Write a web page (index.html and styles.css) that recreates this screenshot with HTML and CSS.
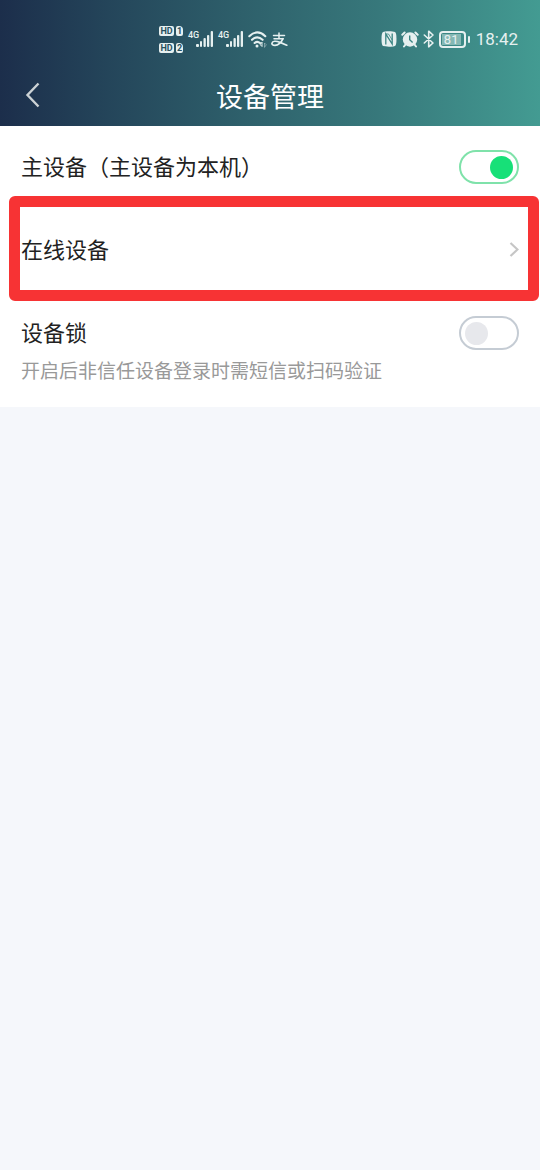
FILE: index.html
```html
<!DOCTYPE html>
<html lang="zh-CN">
<head>
<meta charset="utf-8">
<meta name="viewport" content="width=device-width, initial-scale=1">
<title>设备管理</title>
<link rel="stylesheet" href="styles.css">
</head>
<body>
<header class="header">
  <div class="status">
    <div class="status-left">
      <div class="hd-grid">
        <span class="chip">HD</span><span class="chip chip-sim">1</span>
        <span class="chip">HD</span><span class="chip chip-sim">2</span>
      </div>
      <div class="signal">
        <span class="net">4G</span>
        <svg width="18" height="16" viewBox="0 0 18 16" fill="currentColor" aria-hidden="true"><rect x="0" y="13" width="3" height="3" rx="1"/><rect x="4" y="10" width="2" height="6" rx="1"/><rect x="7.500" y="7" width="2.300" height="9" rx="1"/><rect x="11" y="4" width="2.300" height="12" rx="1"/><rect x="14.700" y="0" width="2.300" height="16" rx="1"/></svg>
      </div>
      <div class="signal">
        <span class="net">4G</span>
        <svg width="18" height="16" viewBox="0 0 18 16" fill="currentColor" aria-hidden="true"><rect x="0" y="13" width="3" height="3" rx="1"/><rect x="4" y="10" width="2" height="6" rx="1"/><rect x="7.500" y="7" width="2.300" height="9" rx="1"/><rect x="11" y="4" width="2.300" height="12" rx="1"/><rect x="14.700" y="0" width="2.300" height="16" rx="1"/></svg>
      </div>
      <svg width="19" height="17" viewBox="0 0 19 17" fill="none" stroke="currentColor" stroke-width="2.100" stroke-linecap="round" aria-hidden="true"><path d="M1.300 5.200Q9.300-2.400 17.300 5.200M4 8.800Q9.300 3.800 14.600 8.800M6.600 12Q9.300 9.600 12 12"/><circle cx="9" cy="15" r="1.500" fill="currentColor" stroke="none"/><path d="M14 11.500v4l-1.500-1.500z" stroke-width="1"/><path d="M16.500 16v-4l1.500 1.500z" stroke-width=".8" opacity=".5"/></svg>
      <svg width="17" height="15" viewBox="0 0 17 15" fill="none" stroke="currentColor" stroke-width="1.500" stroke-linecap="round" aria-hidden="true"><path d="M2.500 3.500h11M8 1v5.500M3 6.700h9"/><path d="M12 6.700C10.500 10 7.500 13.300 4 13.300C1.500 13.300.7 12 1 11C1.600 8.800 5 8.800 9 10.400L15.800 13.200" stroke-width="1.700"/></svg>
    </div>
    <div class="status-right">
      <svg width="16" height="16" viewBox="0 0 16 16" aria-hidden="true"><path fill="currentColor" d="M4 .5C8 0 12 .3 14 1Q15.500 2 15.500 8T14 15Q12 16 8 15.700T2 15Q.5 14 .5 8T2 1z"/><path class="cut" d="M4.800 13.500V3L11.200 13V2.500" stroke-width="1.300"/><path class="cut" d="M4.800 3L7.500 3L11.200 9" stroke-width=".8"/></svg>
      <svg width="18" height="17" viewBox="0 0 18 17" aria-hidden="true"><circle cx="9" cy="8.500" r="7.200" fill="currentColor"/><path d="M1.300 3.800L3.600 1.500M16.700 3.800L14.400 1.500M4.500 13.500L3 15.500M13.500 13.500L15 15.500" stroke="currentColor" stroke-width="2" stroke-linecap="round"/><path class="cut" d="M8.700 4.500V8.800L11.600 11.500" stroke-width="1.400"/></svg>
      <svg width="12" height="18" viewBox="0 0 12 18" fill="none" stroke="currentColor" stroke-width="1.600" stroke-linejoin="round" stroke-linecap="round" aria-hidden="true"><path d="M1.300 5L10 13L5.700 16.800V1.200L10 5L1.300 13"/></svg>
      <div class="battery"><span class="battery-body"><span class="battery-level">81</span></span><span class="battery-cap"></span></div>
      <time class="clock">18:42</time>
    </div>
  </div>
  <div class="titlebar">
    <button class="back" type="button" aria-label="返回"><svg width="16" height="26" viewBox="0 0 16 26" fill="none" stroke="currentColor" stroke-width="2.400" aria-hidden="true"><path d="M14.500 1.500L3.500 13L14.500 24.500"/></svg></button>
    <h1 class="title">设备管理</h1>
  </div>
</header>
<main class="list">
  <div class="row">
    <label class="label" for="primary">主设备（主设备为本机）</label>
    <input class="switch" id="primary" type="checkbox" role="switch" checked>
  </div>
  <a class="row row-marked" href="#online">
    <span class="label">在线设备</span>
    <svg class="arrow" width="12" height="16" viewBox="0 0 12 16" fill="none" stroke="currentColor" stroke-width="2.200" aria-hidden="true"><path d="M3.500 1L10.500 7.500L3.500 14"/></svg>
  </a>
  <div class="row row-lock">
    <label class="label" for="lock">设备锁</label>
    <input class="switch" id="lock" type="checkbox" role="switch" aria-describedby="lock-note">
    <p class="note" id="lock-note">开启后非信任设备登录时需短信或扫码验证</p>
  </div>
</main>
</body>
</html>
```

FILE: styles.css
```css
* {
  box-sizing: border-box;
}

body {
  margin: 0;
  min-height: 100vh;
  background: #f5f7fb;
  color: #222;
  font-family: Roboto, "Noto Sans CJK SC", sans-serif;
}

svg {
  display: block;
  flex: none;
}

.header {
  padding-top: 22px;
  background: linear-gradient(90deg, #1c2e4b 0%, #24455a 20%, #2e606b 45%, #37787b 70%, #439b92 100%);
  color: #fff;
}

.status {
  display: flex;
  justify-content: space-between;
  height: 34px;
  padding: 0 22px 0 159px;
  color: #e6f0f0;
}

.status-left,
.status-right {
  display: flex;
  align-items: center;
  gap: 4px;
}

.hd-grid {
  display: grid;
  grid-template-columns: 15px 7px;
  gap: 7px 2px;
}

.chip {
  height: 10px;
  border-radius: 2px;
  background: #e6f0f0;
  color: #28505f;
  font-size: 9px;
  font-weight: 700;
  line-height: 10px;
  text-align: center;
}

.chip-sim {
  border-top-right-radius: 4px;
}

.signal {
  display: flex;
  align-items: flex-start;
  width: 26px;
}

.hd-grid + .signal {
  margin-left: 1px;
}

.net {
  width: 8px;
  font-size: 9px;
  font-weight: 500;
  line-height: 8px;
}

.cut {
  fill: none;
  stroke: #3b8583;
}

.battery {
  display: flex;
  align-items: center;
  gap: 2px;
  margin-right: 2px;
}

.battery-body {
  width: 27px;
  height: 17px;
  padding: 1px;
  border: 2px solid currentColor;
  border-radius: 4px;
}

.battery-level {
  display: block;
  width: 19px;
  background: #85b8b4;
  font-size: 13px;
  line-height: 11px;
  text-align: center;
}

.battery-cap {
  width: 2px;
  height: 7px;
  border-radius: 1px;
  background: currentColor;
}

.clock {
  font-size: 17px;
  line-height: 36px;
}

.titlebar {
  display: grid;
  grid-template-columns: 60px 1fr 60px;
  align-items: center;
  height: 70px;
  padding-top: 8px;
}

.back {
  display: flex;
  padding: 8px 24px;
  border: 0;
  background: none;
  color: #ccd2d5;
}

.title {
  margin: 0;
  padding-top: 6px;
  font-size: 27px;
  font-weight: 400;
  line-height: 36px;
  text-align: center;
}

.list {
  background: #fff;
}

.row {
  position: relative;
  display: flex;
  align-items: center;
  justify-content: space-between;
  min-height: 82px;
  padding: 0 21px;
  color: inherit;
  text-decoration: none;
}

.row-marked {
  min-height: 84px;
}

.row-marked::after {
  content: "";
  position: absolute;
  inset: -12px 1px -9px 9px;
  border: 11px solid #f73334;
  border-radius: 6px;
  pointer-events: none;
}

.row-lock {
  flex-wrap: wrap;
  row-gap: 9px;
  padding-top: 24px;
  padding-bottom: 24px;
}

.label {
  padding-top: 2px;
  font-size: 22px;
  line-height: 32px;
}

.note {
  width: 100%;
  margin: 0;
  padding-top: 1px;
  color: #999;
  font-size: 19px;
  line-height: 23px;
}

.arrow {
  color: #c6c6c6;
}

.switch {
  appearance: none;
  display: flex;
  align-items: center;
  width: 60px;
  height: 34px;
  margin: 0;
  padding: 0 4px;
  border: 2px solid #c5ccd4;
  border-radius: 17px;
  background: #fff;
}

.switch::before {
  content: "";
  width: 23px;
  height: 23px;
  border-radius: 50%;
  background: #e7e8ec;
}

.switch:checked {
  justify-content: flex-end;
  border-color: #7fe2aa;
}

.switch:checked::before {
  background: #17e078;
}
```
